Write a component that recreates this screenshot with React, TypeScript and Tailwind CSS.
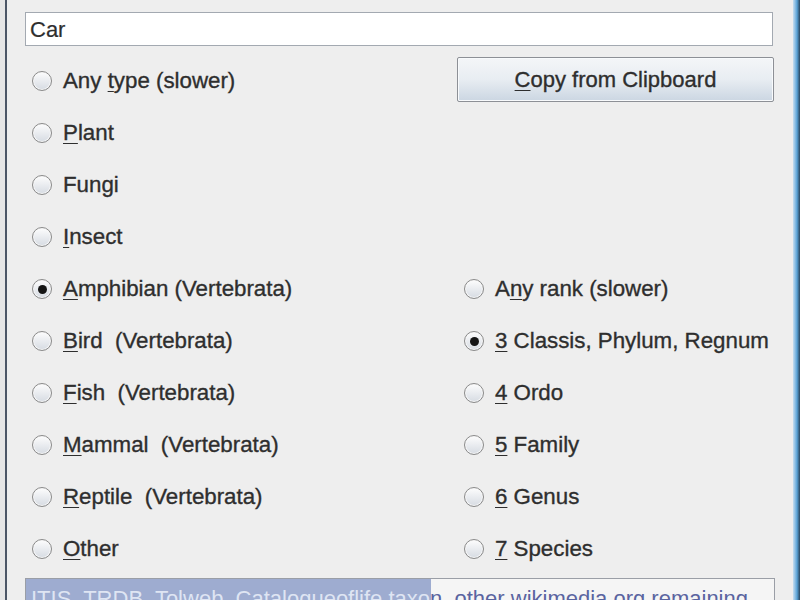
import React from "react";

const font = { fontFamily: '"Liberation Sans", Arial, sans-serif' };

function Radio({ checked }: { checked?: boolean }) {
  return (
    <span className="w-[20px] h-[20px] rounded-full border border-[#8a8a8a] bg-gradient-to-b from-[#fdfdfd] to-[#d6dbe2] flex items-center justify-center shrink-0 shadow-[inset_0_0_0_1px_#f7f7f7]">
      {checked && <span className="w-[9px] h-[9px] rounded-full bg-[#151515]" />}
    </span>
  );
}

type Opt = { pre?: string; u?: string; post: string; checked?: boolean };

function Option({ o }: { o: Opt }) {
  return (
    <div className="flex items-center h-[52px] pl-[7px] gap-[11px]">
      <Radio checked={o.checked} />
      <span className="text-[22.3px] text-[#2e2e2e] whitespace-pre leading-none [-webkit-text-stroke:0.35px_#2e2e2e]">
        {o.pre}
        {o.u && <span className="underline underline-offset-[3px] decoration-1">{o.u}</span>}
        {o.post}
      </span>
    </div>
  );
}

const left: Opt[] = [
  { pre: "Any ", u: "t", post: "ype (slower)" },
  { u: "P", post: "lant" },
  { post: "Fungi" },
  { u: "I", post: "nsect" },
  { u: "A", post: "mphibian (Vertebrata)", checked: true },
  { u: "B", post: "ird  (Vertebrata)" },
  { u: "F", post: "ish  (Vertebrata)" },
  { u: "M", post: "ammal  (Vertebrata)" },
  { u: "R", post: "eptile  (Vertebrata)" },
  { u: "O", post: "ther" },
];

const right: Opt[] = [
  { pre: "A", u: "n", post: "y rank (slower)" },
  { u: "3", post: " Classis, Phylum, Regnum", checked: true },
  { u: "4", post: " Ordo" },
  { u: "5", post: " Family" },
  { u: "6", post: " Genus" },
  { u: "7", post: " Species" },
];

const progressText =
  "ITIS, TRDB, Tolweb, Catalogueoflife taxon, other wikimedia.org remaining";

export default function App() {
  return (
    <div className="w-[800px] h-[600px] overflow-hidden bg-[#eeeeee] flex" style={font}>
      <div className="w-[5px] bg-[#e6e6e6] shrink-0" />
      <div className="w-[2px] bg-[#4c5666] shrink-0" />
      <div className="flex-1 flex flex-col pl-[18px] pr-[18px] pt-[12px]">
        <div className="h-[34px] w-[748px] bg-white border border-[#a3a9b1] flex items-center pl-[4px] text-[22px] text-[#2e2e2e] [-webkit-text-stroke:0.2px_#2e2e2e]">
          Car
        </div>
        <div className="flex mt-[9px]">
          <div className="w-[432px] flex flex-col">
            {left.map((o, i) => (
              <Option key={i} o={o} />
            ))}
          </div>
          <div className="w-[318px] flex flex-col">
            <div className="h-[52px] flex items-start pt-[2px]">
              <button className="w-[317px] h-[45px] border border-[#8d9096] rounded-[2px] bg-gradient-to-b from-[#f4f6f8] via-[#e8edf2] to-[#cbd6e2] text-[22px] text-[#2e2e2e] [-webkit-text-stroke:0.35px_#2e2e2e] shadow-[inset_0_0_0_1px_#f8fafc]">
                <span className="underline underline-offset-[3px] decoration-1">C</span>opy from Clipboard
              </button>
            </div>
            <div className="h-[156px]" />
            {right.map((o, i) => (
              <Option key={i} o={o} />
            ))}
          </div>
        </div>
        <div className="mt-[3px] w-[750px] h-[34px] border border-[#9a9ea6] bg-[#f5f5f5] relative shrink-0">
          <div className="absolute inset-0 pl-[5px] pt-[3px] text-[22px] text-[#5a64a0] whitespace-nowrap">
            {progressText}
          </div>
          <div className="absolute left-0 top-0 bottom-0 w-[405px] bg-[#9eacd0] overflow-hidden">
            <div className="pl-[5px] pt-[3px] text-[22px] text-[#dfe5f3] whitespace-nowrap">
              {progressText}
            </div>
          </div>
        </div>
      </div>
      <div className="w-[8px] shrink-0 bg-gradient-to-r from-[#c6def0] via-[#58a2d6] to-[#1b2938]" />
    </div>
  );
}
